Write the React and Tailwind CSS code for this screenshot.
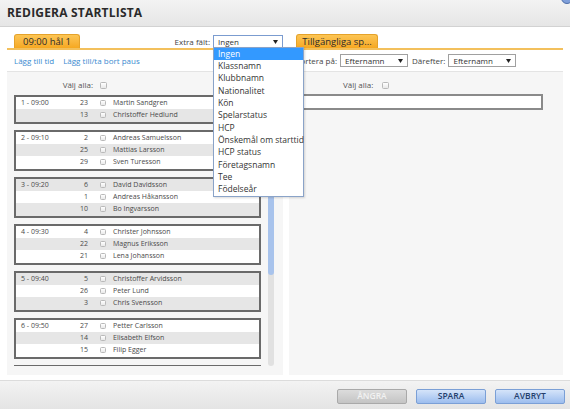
import React from 'react';

const groups = [
  { time: '1 - 09:00', players: [['23', 'Martin Sandgren'], ['13', 'Christoffer Hedlund']] },
  { time: '2 - 09:10', players: [['2', 'Andreas Samuelsson'], ['25', 'Mattias Larsson'], ['29', 'Sven Turesson']] },
  { time: '3 - 09:20', players: [['6', 'David Davidsson'], ['1', 'Andreas Håkansson'], ['10', 'Bo Ingvarsson']] },
  { time: '4 - 09:30', players: [['4', 'Christer Johnsson'], ['22', 'Magnus Eriksson'], ['21', 'Lena Johansson']] },
  { time: '5 - 09:40', players: [['5', 'Christoffer Arvidsson'], ['26', 'Peter Lund'], ['3', 'Chris Svensson']] },
  { time: '6 - 09:50', players: [['27', 'Petter Carlsson'], ['14', 'Elisabeth Elfson'], ['15', 'Filip Egger']] },
];

const extraFields = [
  'Ingen', 'Klassnamn', 'Klubbnamn', 'Nationalitet', 'Kön', 'Spelarstatus', 'HCP',
  'Önskemål om starttid', 'HCP status', 'Företagsnamn', 'Tee', 'Födelseår',
];

function Arrow() {
  return (
    <svg width="5" height="4" viewBox="0 0 5 4" className="shrink-0">
      <path d="M0 0h5L2.5 4z" fill="#222" />
    </svg>
  );
}

function Select({ value, width, focused }) {
  return (
    <div
      className={`flex items-center justify-between h-[13px] ${width} bg-white border px-[4px] text-[8px] text-[#333] ${
        focused ? 'border-[#7b9cd0]' : 'border-[#a0a0a0]'
      }`}
    >
      <span>{value}</span>
      <Arrow />
    </div>
  );
}

function Checkbox({ size = 'w-[6px] h-[6px]' }) {
  return <span className={`block ${size} shrink-0 rounded-[1.5px] border border-[#b9b9b9] bg-gradient-to-b from-white to-[#e9e9e9]`} />;
}

function Tab({ label, width }) {
  return (
    <div
      className={`h-[14px] ${width} rounded-t-[3px] border border-b-0 border-[#e5a22a] bg-gradient-to-b from-[#fcc553] to-[#f6a81f] flex items-center justify-center text-[9.5px] leading-none text-[#2b2b2b] whitespace-nowrap`}
    >
      {label}
    </div>
  );
}

let rowIndex = 0;

function Group({ group }) {
  return (
    <div className="border-2 border-[#6a6a6a] bg-white shrink-0">
      {group.players.map(([num, name], i) => {
        const odd = rowIndex++ % 2 === 1;
        return (
          <div
            key={name}
            className={`flex items-center h-[12.33px] text-[7px] text-[#4a4a4a] whitespace-nowrap ${odd ? 'bg-[#e6e6e6]' : 'bg-white'}`}
          >
            <span className="w-[54px] pl-[5px]">{i === 0 ? group.time : ''}</span>
            <span className="w-[18px] text-right">{num}</span>
            <span className="ml-[12px]">
              <Checkbox />
            </span>
            <span className="ml-[7px]">{name}</span>
          </div>
        );
      })}
    </div>
  );
}

function Button({ label, disabled }) {
  return (
    <div
      className={`h-[15px] w-[70px] rounded-[2px] border flex items-center justify-center text-[8.5px] font-semibold ${
        disabled
          ? 'border-[#a9a9a9] bg-gradient-to-b from-[#dcdcdc] to-[#c4c4c4] text-[#f2f2f2]'
          : 'border-[#7a9fd6] bg-gradient-to-b from-[#d5e4f9] to-[#9cbdee] text-[#24406c]'
      }`}
    >
      {label}
    </div>
  );
}

export default function App() {
  rowIndex = 0;
  return (
    <div className="relative w-[570px] h-[409px] overflow-hidden bg-white font-['Open_Sans',sans-serif] text-[#333] flex flex-col">
      <div className="h-[27px] shrink-0 flex items-center px-[7px] bg-gradient-to-b from-[#f3f3f3] to-[#e6e6e6] border-b border-[#d2d2d2]">
        <h1 className="text-[12px] font-bold tracking-[0.2px] text-[#2a2a2a]">REDIGERA STARTLISTA</h1>
      </div>
      <div className="absolute -top-[8px] -right-[3px] w-[12px] h-[12px] rounded-full border border-[#4e6ea8] bg-[#7f9fda]" />

      <div className="flex gap-[6px] px-[7px] pt-[7px] pb-[5px] h-[353px] shrink-0">
        {/* left panel */}
        <div className="w-[276px] flex flex-col min-h-0">
          <div className="h-[14px] shrink-0 flex items-end justify-between pl-[7px]">
            <Tab label="09:00 hål 1" width="w-[66px]" />
            <div className="flex items-center gap-[3px] text-[8px] text-[#444]">
              <span>Extra fält:</span>
              <Select value="Ingen" width="w-[70px]" focused />
            </div>
          </div>
          <div className="h-[2px] shrink-0 bg-[#f3c05c]" />
          <div className="h-[22px] shrink-0 flex items-center gap-[9px] px-[7px] text-[8px] text-[#3c8bd0] border-b border-[#e4e4e4]">
            <span>Lägg till tid</span>
            <span>Lägg till/ta bort paus</span>
          </div>
          <div className="flex-1 min-h-0 bg-[#f6f6f6] flex flex-col pt-[7px] pb-[9px]">
            <div className="h-[12px] shrink-0 flex items-center pl-[7px] text-[8px] text-[#555]">
              <span className="w-[79px] text-right">Välj alla:</span>
              <span className="ml-[7px]">
                <Checkbox size="w-[7px] h-[7px]" />
              </span>
            </div>
            <div className="mt-[4px] flex-1 min-h-0 flex pl-[7px] overflow-hidden">
              <div className="w-[247px] flex flex-col gap-[6px] overflow-hidden">
                {groups.map((g) => (
                  <Group key={g.time} group={g} />
                ))}
                {/* next start group, scrolled below the fold */}
                <div className="h-[41px] shrink-0 border-2 border-[#6a6a6a] bg-white" />
              </div>
              <div className="ml-[7px] w-[6px] rounded-full bg-[#e1e1e1] flex flex-col">
                <div className="h-[180px] rounded-full bg-[#a8c3ec]" />
              </div>
            </div>
          </div>
        </div>

        {/* right panel */}
        <div className="w-[274px] flex flex-col min-h-0">
          <div className="h-[14px] shrink-0 flex items-end pl-[7px]">
            <Tab label="Tillgängliga sp..." width="w-[82px]" />
          </div>
          <div className="h-[2px] shrink-0 bg-[#f3c05c]" />
          <div className="h-[22px] shrink-0 flex items-center pl-[7px] text-[8px] text-[#444] border-b border-[#e4e4e4] whitespace-nowrap">
            <span>Sortera på:</span>
            <span className="ml-[3px]">
              <Select value="Efternamn" width="w-[68px]" />
            </span>
            <span className="ml-[4px]">Därefter:</span>
            <span className="ml-[3px]">
              <Select value="Efternamn" width="w-[68px]" />
            </span>
          </div>
          <div className="flex-1 min-h-0 bg-[#f6f6f6] flex flex-col pt-[7px]">
            <div className="h-[12px] shrink-0 flex items-center pl-[54px] text-[8px] text-[#555]">
              <span>Välj alla:</span>
              <span className="ml-[9px]">
                <Checkbox size="w-[7px] h-[7px]" />
              </span>
            </div>
            <div className="mt-[3px] ml-[6px] w-[248px] h-[16px] shrink-0 border-2 border-[#8a8a8a] bg-white" />
          </div>
        </div>
      </div>

      <div className="flex-1 flex items-start justify-end gap-[9px] pt-[8px] pr-[5px] border-t border-[#dcdcdc] bg-gradient-to-b from-[#f3f3f3] to-[#e4e4e4]">
        <Button label="ÅNGRA" disabled />
        <Button label="SPARA" />
        <Button label="AVBRYT" />
      </div>

      {/* open native dropdown for Extra fält */}
      <div className="absolute left-[213px] top-[47px] w-[91px] bg-white border border-[#8aa3c8] shadow-[1px_1px_2px_rgba(0,0,0,0.15)] text-[8.5px] text-[#333] whitespace-nowrap">
        {extraFields.map((f, i) => (
          <div
            key={f}
            className={`h-[12.33px] flex items-center pl-[4px] ${i === 0 ? 'bg-[#3399ff] text-white' : ''}`}
          >
            {f}
          </div>
        ))}
      </div>
    </div>
  );
}
